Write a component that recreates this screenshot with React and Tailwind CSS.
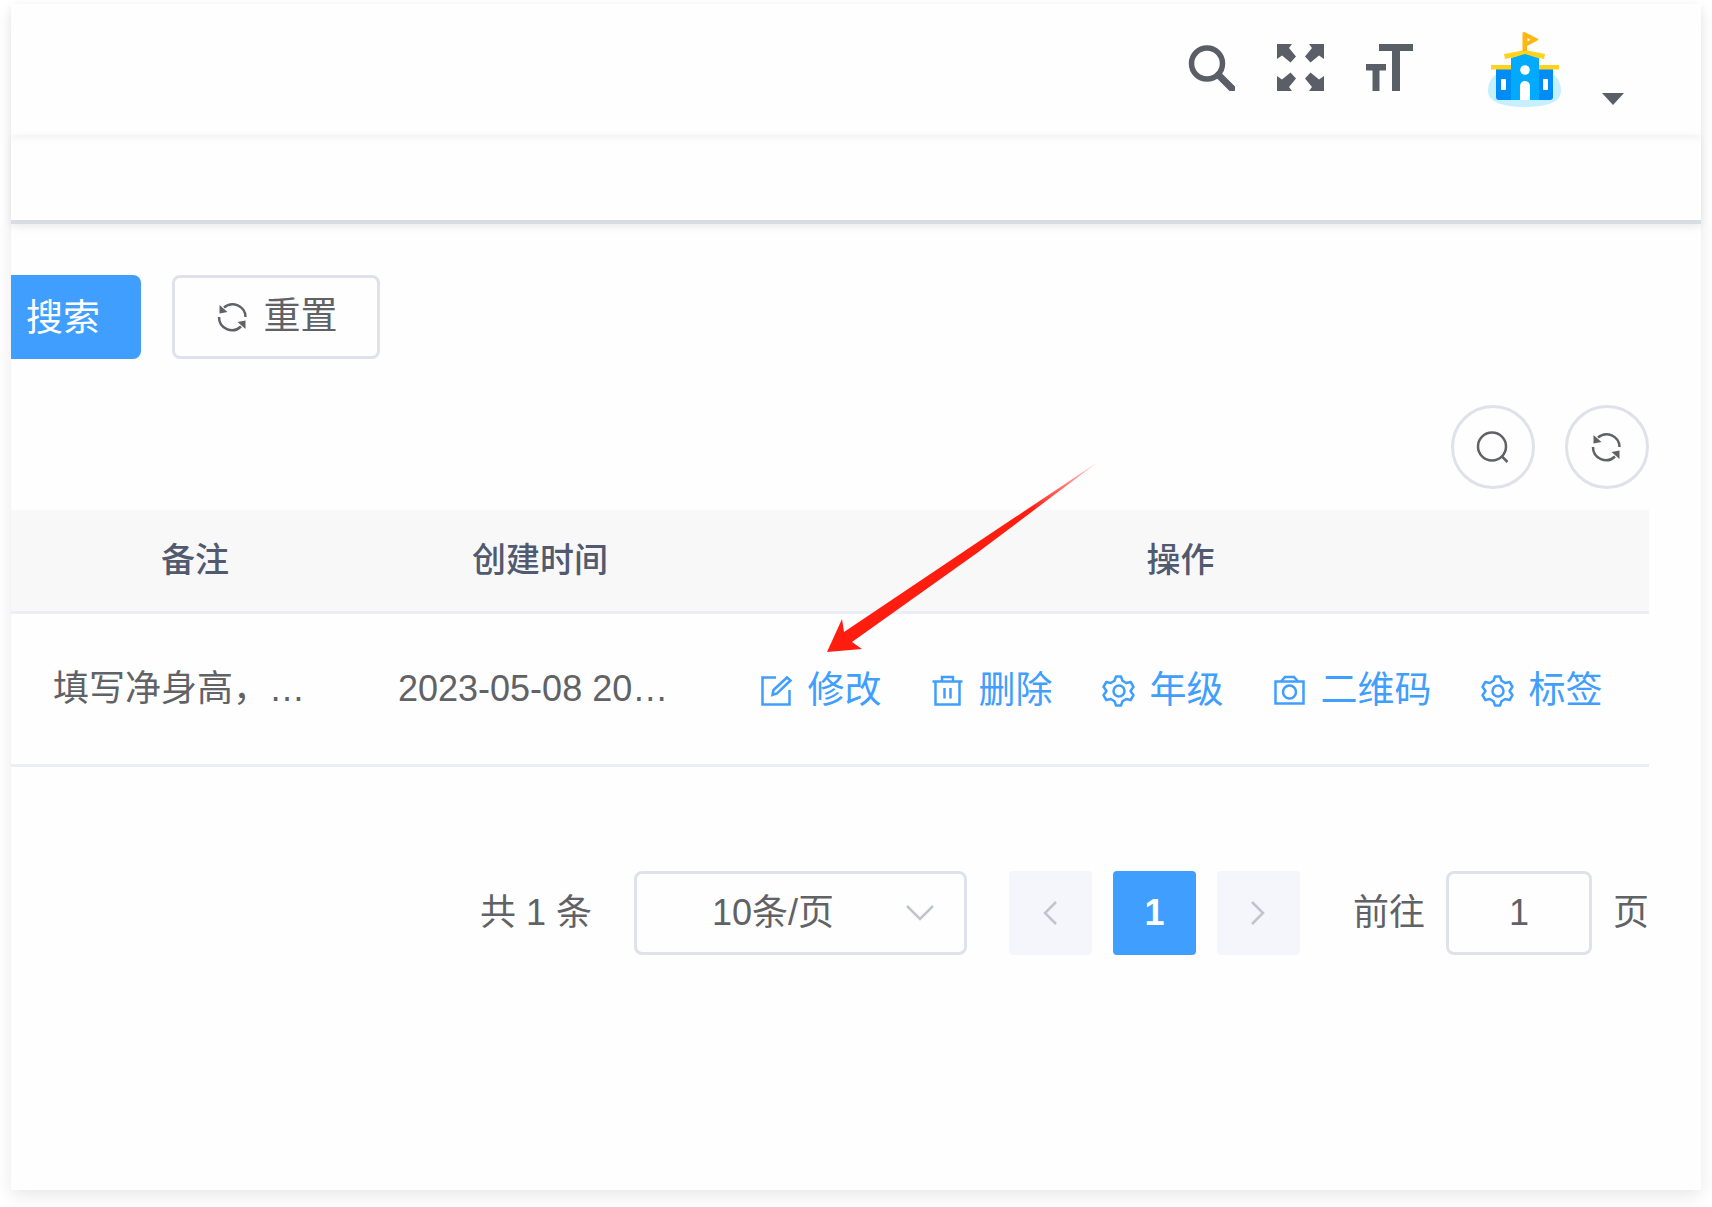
import { useState } from 'react';

function SearchBold() {
  return (
    <svg viewBox="0 0 47 47" className="w-[47px] h-[47px]" fill="none" stroke="currentColor">
      <circle cx="19" cy="19.500" r="15.500" strokeWidth="5.500" />
      <path d="M30.500 31 44 44.500" strokeWidth="7" strokeLinecap="round" />
    </svg>
  );
}

function Fullscreen() {
  return (
    <svg viewBox="0 0 47 47" className="w-[47px] h-[47px]" fill="currentColor">
      <path d="M0 0h15l-3 4 7 8.500-5.500 6L5 11.500 0 15z" />
      <path d="M47 0H32l3 4-7 8.500 5.500 6L42 11.500l5 3.500z" />
      <path d="M0 47h15l-3-4 7-8.500-5.500-6L5 35.500 0 32z" />
      <path d="M47 47H32l3-4-7-8.500 5.500-6 8.500 7L47 32z" />
    </svg>
  );
}

function FontSize() {
  return (
    <svg viewBox="0 0 47 47" className="w-[47px] h-[47px]" fill="currentColor">
      <path d="M13 0h34v7H34v40h-8V7H13z" />
      <path d="M0 20h20v6.500h-6.500V47h-7V26.500H0z" />
    </svg>
  );
}

function SchoolLogo() {
  return (
    <svg viewBox="0 0 75 75" className="w-[75px] h-[75px]">
      <path d="M8 43C3 47 1 53 1 59c0 11 15 16 37 16s36-5 36-16c0-6-2-12-7-16z" fill="#c6f0ff" />
      <path d="M9 37h15v31H12a3 3 0 0 1-3-3zM52 37h14v28a3 3 0 0 1-3 3H52z" fill="#008cf5" />
      <path d="M24 26l14-5 14 5v42H24z" fill="#00aaff" />
      <path d="M4 33h20v4.500H4zM52 33h20v4.500H52z" fill="#ffd21c" />
      <path d="M17 22c8-1 14-3 21-4 7 1 13 3 20 4l-1 5c-7-1-12-3-19-5-7 2-13 4-20 5z" fill="#ffd21c" />
      <path d="M35.500 1c0-1 1-1 2-1l13 6.500c1 .5 1 1.500 0 2L40 14v5h-4.500z" fill="#ffb70f" />
      <path d="M40.500 6v3.500l3-1.800z" fill="#fff" />
      <circle cx="38" cy="38" r="4.800" fill="#fff" />
      <path d="M33 68V54a5 5 0 0 1 10 0v14z" fill="#fff" />
      <rect x="14" y="47" width="5" height="11" rx="1" fill="#fff" />
      <rect x="56" y="47" width="5" height="11" rx="1" fill="#fff" />
    </svg>
  );
}

function Icon({ children }) {
  return (
    <svg viewBox="0 0 36 36" className="w-9 h-9 shrink-0" fill="none" stroke="currentColor" strokeWidth="2.500">
      {children}
    </svg>
  );
}

function RefreshIcon() {
  return (
    <Icon>
      <path d="M9 8.500A13 13 0 0 1 30.500 18M26 27.500A13 13 0 0 1 4 18" />
      <path d="M4.500 6v8.500l8-1.500zM30.500 30v-8.500L22.500 23z" fill="currentColor" stroke="none" />
    </Icon>
  );
}

function SearchIcon() {
  return (
    <Icon>
      <circle cx="17" cy="17.500" r="14" />
      <path d="M27 27.500l5.500 5.500" />
    </Icon>
  );
}

function EditIcon() {
  return (
    <Icon>
      <path d="M17 4.500H3.500v27h27V17" />
      <path d="M28 4.500l3.500 3L18 20.500l-4.500 1.500 1-5z" />
    </Icon>
  );
}

function DeleteIcon() {
  return (
    <Icon>
      <path d="M2.500 8.500h30M5.500 8.500v23h24v-23M12 8V4h11v4M14.500 15v10.500M20.500 15v10.500" />
    </Icon>
  );
}

function GearIcon() {
  return (
    <Icon>
      <circle cx="18" cy="18" r="5.500" />
      <path d="M15 3.500h5l1.500 4.300 3.700 2.200 4.500-1 2.800 4.800-3 4.200 3 4.200-2.800 4.800-4.500-1-3.700 2.200L20 32.500h-5l-1.500-4.300L9.800 26l-4.500 1-2.800-4.800 3-4.200-3-4.200L5.300 9l4.500 1 3.700-2.200z" strokeLinejoin="round" />
    </Icon>
  );
}

function CameraIcon() {
  return (
    <Icon>
      <path d="M3.500 8.500H9L13 4h9l4 4.500h5.500v22h-28z" />
      <path d="M9 8.500h17" />
      <circle cx="17.500" cy="19" r="6.500" />
    </Icon>
  );
}

const actions = [
  { label: '修改', icon: EditIcon },
  { label: '删除', icon: DeleteIcon },
  { label: '年级', icon: GearIcon },
  { label: '二维码', icon: CameraIcon },
  { label: '标签', icon: GearIcon },
];

function Navbar() {
  return (
    <header className="flex items-center justify-end h-[131px] pr-[77px] text-[#5a5e66] shadow-[0_3px_8px_rgba(0,21,41,0.05)]">
      <div className="flex items-center gap-[42px] mr-[74px] pb-1">
        <button aria-label="搜索菜单"><SearchBold /></button>
        <button aria-label="全屏"><Fullscreen /></button>
        <button aria-label="字体大小"><FontSize /></button>
      </div>
      <button aria-label="用户菜单" className="flex items-end gap-10">
        <SchoolLogo />
        <svg viewBox="0 0 22 14" className="w-[22px] h-3.5" fill="currentColor">
          <path d="M0 0h22L11 12z" />
        </svg>
      </button>
    </header>
  );
}

function Pagination() {
  const [size, setSize] = useState('10');
  const [page, setPage] = useState('1');
  return (
    <nav className="flex items-center justify-end mt-[104px] pr-[52px]">
      <span className="mr-[42px]">共 1 条</span>
      <div className="relative mr-[42px]">
        <select aria-label="每页条数" value={size} onChange={(e) => setSize(e.target.value)}
          className="block appearance-none w-[333px] h-[84px] border-3 border-[#dfe2ea] rounded-lg bg-transparent text-center pr-[55px]">
          <option value="10">10条/页</option>
          <option value="20">20条/页</option>
        </select>
        <svg viewBox="0 0 28 16" className="absolute right-[33px] top-[34px] w-7 h-4 pointer-events-none" fill="none" stroke="#c0c4cc" strokeWidth="2.500">
          <path d="M1 1l13 13L27 1" />
        </svg>
      </div>
      <div className="flex gap-[21px] mr-[53px]">
        <button disabled aria-label="上一页" className="flex items-center justify-center w-[83px] h-[84px] bg-[#f4f6fb] rounded-sm">
          <svg viewBox="0 0 14 24" className="w-3.5 h-6" fill="none" stroke="#c0c4cc" strokeWidth="2.500"><path d="M13 1L2 12l11 11" /></svg>
        </button>
        <button className="w-[83px] h-[84px] bg-[#409eff] rounded-sm text-white font-bold">1</button>
        <button disabled aria-label="下一页" className="flex items-center justify-center w-[83px] h-[84px] bg-[#f4f6fb] rounded-sm">
          <svg viewBox="0 0 14 24" className="w-3.5 h-6" fill="none" stroke="#c0c4cc" strokeWidth="2.500"><path d="M1 1l11 11L1 23" /></svg>
        </button>
      </div>
      <label className="flex items-center gap-[21px]">
        前往
        <input value={page} onChange={(e) => setPage(e.target.value)}
          className="w-[146px] h-[84px] border-3 border-[#dfe2ea] rounded-lg text-center" />
        页
      </label>
    </nav>
  );
}

export default function App() {
  return (
    <div className="min-h-screen flex flex-col pt-1 px-[11px] pb-[17px] bg-white font-['Liberation_Sans','Noto_Sans_CJK_SC',sans-serif] text-[36px] leading-[48px] text-[#606266]">
      <main className="flex-1 bg-[#fefefe] shadow-[0_6px_16px_rgba(0,0,0,0.09)]">
        <Navbar />
        <div className="h-[89px] border-b-4 border-[#d8dce5] shadow-[0_3px_8px_rgba(0,0,0,0.08)]" />

        <div className="flex gap-[31px] pt-[51px] text-[37px]">
          <button className="h-[84px] w-[130px] pl-[15px] pt-1 text-left bg-[#409eff] text-white rounded-r-lg">搜索</button>
          <button className="flex items-center justify-center gap-[13px] h-[84px] w-[208px] border-3 border-[#dfe2ea] rounded-lg">
            <RefreshIcon />
            重置
          </button>
        </div>

        <div className="flex justify-end gap-[30px] mt-[46px] mb-[21px] pr-[52px]">
          <button aria-label="显示搜索" className="flex items-center justify-center size-[84px] border-3 border-[#dfe2ea] rounded-full">
            <SearchIcon />
          </button>
          <button aria-label="刷新" className="flex items-center justify-center size-[84px] border-3 border-[#dfe2ea] rounded-full">
            <RefreshIcon />
          </button>
        </div>

        <div className="relative mr-[52px]">
          <table className="w-full table-fixed">
            <colgroup>
              <col className="w-[357px]" />
              <col className="w-[344px]" />
              <col />
            </colgroup>
            <thead>
              <tr className="h-[102px] bg-[#f8f8f9] border-b-3 border-[#ebeef5] text-[34px] text-[#515a6e]">
                <th className="pl-[37px] pr-[26px] font-medium">备注</th>
                <th className="px-[26px] font-medium">创建时间</th>
                <th className="px-[26px] font-medium">操作</th>
              </tr>
            </thead>
            <tbody>
              <tr className="h-[153px] border-b-3 border-[#ebeef5]">
                <td className="pl-[42px] whitespace-nowrap">填写净身高，…</td>
                <td className="pl-[30px] whitespace-nowrap">2023-05-08 20…</td>
                <td>
                  <div className="flex justify-center gap-12 pt-1 text-[37px] text-[#409eff]">
                    {actions.map(({ label, icon: ActionIcon }) => (
                      <button key={label} className="flex items-center gap-[13px] whitespace-nowrap">
                        <ActionIcon />
                        {label}
                      </button>
                    ))}
                  </div>
                </td>
              </tr>
            </tbody>
          </table>

          {/* pointer to the edit action */}
          <svg viewBox="0 0 271 190" className="absolute right-[551px] top-[-48px] w-[271px] h-[190px] pointer-events-none">
            <defs>
              <linearGradient id="tail" x1="0" y1="1" x2="1" y2="0">
                <stop offset="0.750" stopColor="#ff1d10" />
                <stop offset="1" stopColor="#ff1d10" stopOpacity="0.200" />
              </linearGradient>
            </defs>
            <path d="M0 190l15-33 2 13L145 84 271 0 150 91 25 180l10 7z" fill="url(#tail)" />
          </svg>
        </div>

        <Pagination />
      </main>
    </div>
  );
}
